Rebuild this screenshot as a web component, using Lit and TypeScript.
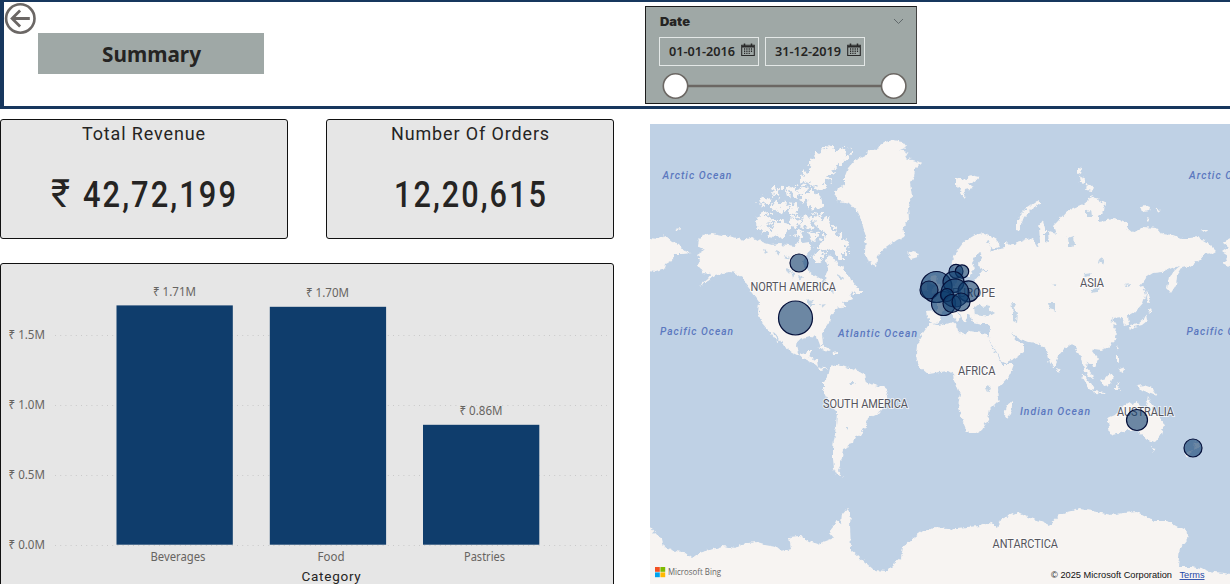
import { LitElement, html, svg, css } from "lit";
import { customElement, property } from "lit/decorators.js";

/** Single line of text set to an exact width. */
@customElement("fit-text")
class FitText extends LitElement {
  @property() text = "";
  @property({ type: Number }) width = 100;
  @property({ type: Number }) height = 20;
  @property({ type: Number }) baseline = 15;
  static styles = css`
    :host { display: block; }
    svg { display: block; overflow: visible; }
    text { fill: currentColor; }
  `;
  render() {
    return html`<svg width=${this.width} height=${this.height}>
      <text x="0" y=${this.baseline} textLength=${this.width} lengthAdjust="spacingAndGlyphs">${this.text}</text>
    </svg>`;
  }
}

const LAND: string[] = [
  // North America
  "698,240 703,235 712,233 722,235 733,237 744,240 752,237 758,240 765,243 772,245 780,244 788,245 795,246 800,238 803,243 809,242 812,248 806,255 803,262 806,269 813,274 818,277 821,280 823,287 826,284 825,276 829,268 826,262 828,254 834,257 838,265 844,269 850,278 857,287 859,292 850,293 852,299 843,303 846,307 836,309 830,317 829,322 825,328 822,334 823,344 820,345 817,337 810,336 803,338 797,341 796,347 799,355 805,353 808,350 812,350 809,357 817,360 818,366 823,368 828,368 821,370 815,364 803,358 793,353 785,347 779,339 776,333 773,332 779,342 775,339 768,330 762,323 758,313 759,302 752,292 745,283 742,277 735,273 730,272 723,273 715,275 707,282 699,286 708,278 711,274 703,273 698,265 700,260 697,255 705,250 697,246",
  // Greenland
  "893,140 903,142 907,147 900,150 908,153 905,158 922,163 915,170 914,178 910,183 912,197 908,207 909,220 903,228 905,236 897,240 890,245 883,250 878,255 876,266 869,263 865,252 866,237 862,223 858,212 850,203 838,201 834,192 845,184 845,176 848,168 855,160 867,155 868,150 876,151 880,145 885,142",
  // Caribbean
  "818,347 824,346 831,350 829,351 822,349", "832,352 838,351 838,354 833,354",
  // South America
  "830,367 838,364 845,366 853,370 858,371 865,375 867,383 875,385 883,387 888,391 887,397 883,405 882,411 877,414 868,418 866,426 860,435 854,438 853,443 847,444 849,447 844,449 843,457 840,461 840,467 838,471 843,477 837,474 834,468 833,459 833,447 836,427 837,412 830,405 823,389 823,382 828,376",
  // Africa
  "930,323 940,326 953,322 957,325 958,331 964,334 970,331 987,334 990,342 997,355 1002,364 1014,364 1010,375 998,388 999,400 990,409 988,420 982,430 975,434 968,434 963,422 958,408 960,393 957,386 954,381 953,374 948,371 940,372 928,374 921,368 917,361 916,353 917,345 923,333",
  "1012,401 1012,407 1010,415 1007,419 1004,415 1006,406",
  // Eurasia
  "951,266 953,258 957,251 963,243 970,238 975,235 983,233 990,236 997,240 1000,246 994,249 988,246 992,251 1000,249 1005,248 1005,240 1010,245 1020,242 1027,239 1032,238 1037,247 1040,242 1039,226 1043,220 1045,228 1045,242 1049,243 1048,231 1056,234 1053,226 1058,221 1066,212 1073,208 1083,204 1088,200 1092,195 1097,199 1105,203 1104,211 1098,217 1098,221 1115,219 1127,222 1127,228 1133,233 1143,227 1157,228 1162,234 1173,235 1181,238 1190,238 1198,237 1208,243 1216,251 1211,254 1206,252 1200,260 1190,266 1182,268 1177,276 1176,285 1171,293 1167,288 1169,278 1175,270 1180,266 1172,268 1163,272 1153,273 1145,278 1139,287 1143,286 1146,294 1143,303 1136,311 1127,316 1128,324 1125,325 1122,317 1113,318 1110,321 1117,323 1113,327 1117,333 1115,341 1107,348 1101,350 1094,349 1093,352 1098,359 1095,367 1087,362 1086,367 1092,374 1093,380 1087,375 1083,366 1081,358 1075,347 1072,344 1065,349 1059,356 1054,368 1050,363 1047,350 1042,346 1037,343 1028,342 1018,338 1012,333 1016,341 1024,344 1024,352 1015,358 1005,363 1001,361 995,349 988,338 990,330 989,324 981,324 973,322 970,316 966,314 967,320 964,322 960,314 953,309 961,317 956,321 952,314 946,309 941,313 940,320 935,324 928,321 926,311 938,310 938,303 930,300 940,295 948,289 955,285 957,278 962,278 964,283 972,282 978,278 980,272 990,270 982,270 979,263 983,256 979,253 975,258 972,263 974,269 969,277 964,276 961,269 955,270",
  // British Isles, Iceland, Svalbard
  "931,276 937,275 936,281 941,287 940,292 931,293 934,286 930,282", "922,284 928,282 928,290 921,291",
  "908,254 912,251 919,253 918,257 911,259",
  "956,178 966,180 970,175 979,177 974,183 969,182 973,188 965,190 964,198 960,193 961,188 956,185",
  // Novaya Zemlya and Siberian islands
  "1016,230 1016,222 1021,214 1028,207 1040,199 1040,204 1031,210 1024,217 1021,225 1020,231",
  "1077,167 1082,168 1081,175 1077,173", "1079,176 1085,179 1084,185 1080,182", "1087,184 1093,186 1092,191 1086,190",
  "1140,206 1145,205 1150,207 1149,211 1142,212", "1155,208 1160,210 1158,213", "1146,218 1150,219 1149,221",
  "1201,229 1207,229 1205,232", "675,229 680,228 679,231",
  "1147,290 1150,299 1148,303 1146,299", "1148,309 1153,310 1149,314", "1146,315 1147,321 1142,325 1134,327 1131,330 1130,326 1138,324 1144,319",
  "1117,345 1119,350 1116,348",
  // Chukotka and Alaska across the date line
  "640,237 658,239 665,236 672,242 679,244 683,250 692,253 683,254 674,254 673,260 666,264 665,269 656,272 640,270",
  "1238,235 1223,242 1229,247 1222,252 1228,256 1223,264 1238,271",
  // South-east Asia and Oceania
  "1080,373 1086,377 1093,387 1094,391 1089,388", "1094,391 1104,392 1105,394 1095,393",
  "1100,380 1106,378 1110,373 1114,376 1110,385 1104,386", "1116,383 1120,382 1117,385 1120,390 1116,390",
  "1116,356 1119,356 1119,363 1116,361", "1121,367 1124,369 1123,373 1119,371",
  "1137,386 1144,385 1152,388 1157,395 1152,393 1146,392 1141,390",
  "1107,418 1116,414 1124,405 1129,402 1132,404 1138,401 1139,406 1145,410 1148,397 1152,405 1155,412 1161,418 1164,425 1161,435 1155,442 1147,440 1141,435 1138,431 1127,430 1121,433 1110,436 1109,427",
  "1151,447 1157,448 1154,452", "1195,441 1200,445 1194,450", "1184,455 1191,451 1188,458",
  "1057,368 1060,370 1058,373",
  // Antarctica
  "640,520 650,527 655,533 662,539 664,547 674,551 684,552 692,558 699,553 710,550 722,546 735,548 742,544 755,542 765,545 776,547 782,552 791,549 789,537 800,536 808,541 817,544 826,541 834,538 829,532 833,527 836,521 841,524 842,514 847,508 851,512 850,526 851,550 858,556 865,562 874,570 887,571 893,565 901,558 903,547 912,539 923,531 935,528 947,529 967,527 980,526 990,522 997,527 1000,520 1008,516 1018,512 1030,518 1041,521 1050,525 1058,516 1068,512 1080,509 1097,512 1110,515 1123,513 1137,512 1147,517 1153,521 1167,521 1178,527 1188,532 1187,540 1180,548 1178,567 1193,567 1208,571 1238,575 1238,594 640,594",
];

// Canadian Arctic islands
const ARCTIC: string[] = [
  "828,147 836,149 845,148 850,154 841,164 834,170 828,180 824,188 818,191 811,184 803,186 800,175 808,172 810,166 811,158 819,152",
  "812,192 818,194 824,200 822,207 809,209 807,202 798,199 803,192",
  "799,186 807,188 804,194 796,193", "787,187 796,188 798,196 790,198",
  "775,186 781,190 778,197 772,193", "762,198 772,196 769,203 759,206",
  "771,204 781,201 789,205 784,212 775,213", "791,202 799,207 797,214 788,212",
  "759,215 767,213 772,219 768,229 761,233 757,225",
  "771,220 782,220 791,226 788,234 779,238 769,237 765,230 773,227",
  "789,215 798,217 801,224 793,227", "796,229 804,230 801,238 794,236",
  "802,215 812,217 813,226 807,230 801,223",
  "812,214 822,216 830,221 834,230 841,236 847,244 849,253 842,253 846,261 839,261 835,253 829,249 823,251 817,247 823,242 826,235 820,230 814,224",
  "809,231 817,233 820,240 811,241", "815,253 820,250 826,256 819,262 812,261",
  "852,287 859,288 859,294 853,294",
];

const WATER: string[] = [
  "974,308 979,304 984,307 988,305 989,309 995,313 990,316 982,315 975,314",
  "1011,303 1017,303 1014,309 1018,313 1017,323 1013,321 1013,313",
  "985,388 989,385 991,389 987,392", "1068,238 1074,236 1075,245 1069,247", "1083,250 1079,253", "1100,258 1105,260 1103,265 1099,262",
  "1086,211 1092,210 1093,217 1086,217", "1048,303 1055,303 1056,311 1049,309", "1092,291 1099,287 1097,292 1091,293",
  "1084,274 1091,273 1090,276 1085,277", "1050,284 1057,283 1055,286",
  "784,255 790,257 786,260", "775,251 781,252 779,256", "763,249 768,251 765,254", "786,268 792,270 789,274", "798,275 803,277 800,281",
  "806,299 814,300 811,303 816,306 809,306", "820,305 826,304 822,308",
  "791,272 794,273 793,279", "1125,285 1130,284 1129,287", "838,275 843,278 839,280", "830,289 835,291 832,294",
  "849,382 855,382 852,385", "846,427 849,427 848,430", "990,244 986,243 988,240",
];

interface Bubble { x: number; y: number; r: number; }
const BUBBLES: Bubble[] = [
  { x: 799, y: 263, r: 9 }, { x: 795.5, y: 318, r: 17 },
  { x: 936.5, y: 287, r: 15.5 }, { x: 929, y: 290, r: 9 },
  { x: 956, y: 271.3, r: 7 }, { x: 962, y: 271.5, r: 6.7 },
  { x: 953.5, y: 282, r: 10.5 }, { x: 968.5, y: 291.3, r: 10.5 },
  { x: 943.5, y: 303.5, r: 12 }, { x: 955, y: 293, r: 14 },
  { x: 947, y: 295, r: 6.5 }, { x: 952, y: 303.5, r: 9 }, { x: 961, y: 302, r: 9 },
  { x: 1137, y: 420, r: 10.5 }, { x: 1193, y: 448, r: 9 },
];

interface Label { t: string; x: number; y: number; w: number; sea?: boolean; }
const LABELS: Label[] = [
  { t: "Arctic Ocean", x: 662.5, y: 179, w: 70, sea: true },
  { t: "Arctic Ocean", x: 1189, y: 179, w: 70, sea: true },
  { t: "Pacific Ocean", x: 660, y: 335, w: 74, sea: true },
  { t: "Pacific Ocean", x: 1186.5, y: 335, w: 74, sea: true },
  { t: "Atlantic Ocean", x: 838, y: 337, w: 80, sea: true },
  { t: "Indian Ocean", x: 1020, y: 415, w: 71, sea: true },
  { t: "NORTH AMERICA", x: 750.5, y: 291, w: 85.5 },
  { t: "SOUTH AMERICA", x: 823, y: 408, w: 85 },
  { t: "EUROPE", x: 952, y: 297, w: 43 },
  { t: "ASIA", x: 1080, y: 287, w: 24 },
  { t: "AFRICA", x: 958, y: 375, w: 37.5 },
  { t: "AUSTRALIA", x: 1117, y: 416, w: 57 },
  { t: "ANTARCTICA", x: 992.5, y: 548, w: 65.5 },
];

@customElement("world-map")
class WorldMap extends LitElement {
  static styles = css`
    :host { display: block; }
    svg { display: block; }
    .land { fill: #f7f4f2; }
    .water { fill: #c3d4e5; }
    .bubble { fill: #0f3d6e; fill-opacity: 0.6; stroke: #05103a; stroke-width: 1.2; }
    .place { font: 12px Roboto, sans-serif; fill: #55555d; paint-order: stroke; stroke: #ffffff; stroke-opacity: 0.65; stroke-width: 2px; }
    .sea { font: italic 500 11px Roboto, sans-serif; fill: #5b78bf; letter-spacing: 1.1px; }
    .credit { font: 9px "Liberation Sans", Arial, sans-serif; fill: #111; }
    .link { fill: #2448a8; text-decoration: underline; }
    .brand { font: 9px "Open Sans", sans-serif; fill: #666; }
  `;
  render() {
    return html`<svg width="580" height="460" viewBox="650 124 580 460">
      <defs>
        <filter id="coast" filterUnits="userSpaceOnUse" x="640" y="114" width="600" height="480">
          <feTurbulence type="fractalNoise" baseFrequency="0.22" numOctaves="3" seed="4" result="n" />
          <feDisplacementMap in="SourceGraphic" in2="n" scale="5" xChannelSelector="R" yChannelSelector="G" />
        </filter>
        <filter id="fjords" filterUnits="userSpaceOnUse" x="740" y="124" width="140" height="180">
          <feTurbulence type="fractalNoise" baseFrequency="0.2" numOctaves="4" seed="9" result="n" />
          <feDisplacementMap in="SourceGraphic" in2="n" scale="14" xChannelSelector="R" yChannelSelector="G" />
        </filter>
      </defs>
      <rect x="650" y="124" width="580" height="460" fill="#bfd1e5" />
      <g filter="url(#fjords)">${ARCTIC.map((p) => svg`<polygon class="land" points=${p} />`)}</g>
      <g filter="url(#coast)">
        ${LAND.map((p) => svg`<polygon class="land" points=${p} />`)}
        ${WATER.map((p) => svg`<polygon class="water" points=${p} />`)}
      </g>
      ${LABELS.map((l) => svg`<text class=${l.sea ? "sea" : "place"} x=${l.x} y=${l.y} textLength=${l.w} lengthAdjust="spacingAndGlyphs">${l.t}</text>`)}
      ${BUBBLES.map((b) => svg`<circle class="bubble" cx=${b.x} cy=${b.y} r=${b.r} />`)}
      <rect x="655" y="567" width="4.8" height="4.8" fill="#f25022" />
      <rect x="660.4" y="567" width="4.8" height="4.8" fill="#7fba00" />
      <rect x="655" y="572.4" width="4.8" height="4.8" fill="#00a4ef" />
      <rect x="660.4" y="572.4" width="4.8" height="4.8" fill="#ffb900" />
      <text class="brand" x="668" y="575" textLength="53" lengthAdjust="spacingAndGlyphs">Microsoft Bing</text>
      <text class="credit" x="1051" y="578" textLength="121" lengthAdjust="spacingAndGlyphs">© 2025 Microsoft Corporation</text>
      <text class="credit link" x="1179.5" y="578" textLength="25" lengthAdjust="spacingAndGlyphs">Terms</text>
    </svg>`;
  }
}

const BARS = [
  { name: "Beverages", label: "₹ 1.71M", x: 116.5, top: 305.4, ly: 296, lx: 153, nx: 150.5, nw: 55 },
  { name: "Food", label: "₹ 1.70M", x: 269.8, top: 306.8, ly: 297, lx: 306, nx: 317.5, nw: 27 },
  { name: "Pastries", label: "₹ 0.86M", x: 423, top: 424.8, ly: 415, lx: 459.5, nx: 464, nw: 41 },
];
const TICKS = [
  { t: "₹ 1.5M", y: 335.5 }, { t: "₹ 1.0M", y: 405.5 }, { t: "₹ 0.5M", y: 475.5 }, { t: "₹ 0.0M", y: 545.5 },
];

@customElement("category-chart")
class CategoryChart extends LitElement {
  static styles = css`
    :host { display: block; }
    svg { display: block; }
    .grid { stroke: #c9c9c9; stroke-width: 1; stroke-dasharray: 1 4.2; }
    .bar { fill: #0f3d6c; }
    .small { font: 12px "Noto Sans", sans-serif; fill: #666461; }
    .axis { font: 13px Roboto, sans-serif; fill: #252423; letter-spacing: 0.7px; }
  `;
  render() {
    return html`<svg width="612" height="321" viewBox="1 264 612 321">
      ${TICKS.map((k) => svg`<line class="grid" x1="55" x2="607" y1=${k.y} y2=${k.y} />
        <text class="small" x="8.5" y=${k.y + 3.9} textLength="36.5" lengthAdjust="spacingAndGlyphs">${k.t}</text>`)}
      ${BARS.map((b) => svg`<rect class="bar" x=${b.x} y=${b.top} width="116.3" height=${544.7 - b.top} />
        <text class="small" x=${b.lx} y=${b.ly} textLength="43" lengthAdjust="spacingAndGlyphs">${b.label}</text>
        <text class="small" x=${b.nx} y="561" textLength=${b.nw} lengthAdjust="spacingAndGlyphs">${b.name}</text>`)}
      <text class="axis" x="301.5" y="581" textLength="60" lengthAdjust="spacingAndGlyphs">Category</text>
    </svg>`;
  }
}

@customElement("app-root")
class AppRoot extends LitElement {
  static styles = css`
    :host { display: block; width: 1230px; height: 586px; overflow: hidden; background: #fff; color: #252423; }
    * { box-sizing: border-box; }
    svg { display: block; }
    .header { display: flex; align-items: flex-start; height: 109px; border: solid #17375e; border-width: 2px 0 3px 4px; }
    .back { margin: 1px 0 0 0; width: 33px; flex: none; }
    .title { width: 226px; height: 41px; margin: 31px 0 0 1px; background: #9fa8a6; display: flex; justify-content: center; flex: none; font: 700 22px "Noto Sans", sans-serif; }
    .slicer { width: 271.5px; height: 98px; margin: 4px 0 0 381px; border: 1px solid #1b1b1b; border-right-color: #444; background: #9fa8a6; flex: none; padding: 7px 6px 0 13px; }
    .row { display: flex; justify-content: space-between; height: 23px; padding-left: 1px; }
    .name { font: 900 11.5px Inter, "Open Sans", sans-serif; }
    .chev { margin: 4px 6px 0 0; }
    .dates { display: flex; gap: 6px; height: 29px; }
    .date { width: 100px; height: 29px; border: 1px solid #e4e8e7; display: flex; padding-left: 9px; gap: 6px; font: 600 12px "Noto Sans", sans-serif; }
    .cal { margin-top: 4.5px; }
    .body { display: flex; align-items: flex-start; padding-top: 10px; height: 475px; overflow: hidden; }
    .left { width: 614px; flex: none; }
    .cards { display: flex; justify-content: space-between; }
    .card { width: 288px; height: 120px; border: 1px solid #111; border-radius: 3px; background: #e6e6e6; display: flex; flex-direction: column; align-items: center; }
    .cap { font: 18.5px Roboto, sans-serif; letter-spacing: 0.9px; }
    .val { font: 500 37.5px Roboto, sans-serif; letter-spacing: 2.5px; }
    .value { margin-top: 22px; display: flex; gap: 13px; padding-left: 1px; }
    .rupee { font: 39px Roboto, sans-serif; }
    .chart { margin-top: 24px; height: 340px; border: 1px solid #111; border-radius: 3px; background: #e6e6e6; }
    .map { margin: 5px 0 0 36px; }
  `;

  private calendar() {
    return html`<svg class="cal" width="14" height="14" viewBox="0 0 14 14" fill="none" stroke="#292929">
      <path d="M.7 2.2h12.6v10.3H.7z" stroke-width="1.1" />
      <path d="M1 3.8h12M3.5.5v3M10.5.5v3" stroke-width="1.5" />
      <path d="M3 6h1.2M5.3 6h1.2M7.6 6h1.2M9.9 6h1.2M3 8.2h1.2M5.3 8.2h1.2M7.6 8.2h1.2M9.9 8.2h1.2M3 10.4h1.2M5.3 10.4h1.2M7.6 10.4h1.2" stroke-width="1.4" />
    </svg>`;
  }

  render() {
    return html`
      <div class="header">
        <svg class="back" width="33" height="33" viewBox="0 0 33 33" fill="none" stroke="#6b6765">
          <circle cx="16.3" cy="15.5" r="14.2" stroke-width="2.6" />
          <path d="M25.8 15.5H8M16.1 7.5l-8 8 8 8" stroke-width="2.8" />
        </svg>
        <div class="title"><fit-text text="Summary" width="99" height="41" baseline="29"></fit-text></div>
        <div class="slicer">
          <div class="row">
            <fit-text class="name" text="Date" width="30" height="16" baseline="12"></fit-text>
            <svg class="chev" width="11" height="7" viewBox="0 0 11 7" fill="none" stroke="#60686a"><path d="M1 1l4.5 4.5L10 1" /></svg>
          </div>
          <div class="dates">
            <div class="date"><fit-text text="01-01-2016" width="66" height="27" baseline="18"></fit-text>${this.calendar()}</div>
            <div class="date"><fit-text text="31-12-2019" width="66" height="27" baseline="18"></fit-text>${this.calendar()}</div>
          </div>
          <svg width="250" height="34" viewBox="0 0 250 34">
            <path d="M16 20H235" stroke="#6b6763" stroke-width="2.6" />
            <circle cx="16.5" cy="20" r="12.2" fill="#fff" stroke="#6b6763" stroke-width="1.6" />
            <circle cx="234.7" cy="20" r="12.2" fill="#fff" stroke="#6b6763" stroke-width="1.6" />
          </svg>
        </div>
      </div>
      <div class="body">
        <div class="left">
          <div class="cards">
            <div class="card">
              <fit-text class="cap" text="Total Revenue" width="124" height="26" baseline="19.5"></fit-text>
              <div class="value">
                <fit-text class="rupee" text="₹" width="19" height="50" baseline="38.5"></fit-text>
                <fit-text class="val" text="42,72,199" width="155" height="50" baseline="39"></fit-text>
              </div>
            </div>
            <div class="card">
              <fit-text class="cap" text="Number Of Orders" width="159" height="26" baseline="19.5"></fit-text>
              <div class="value">
                <fit-text class="val" text="12,20,615" width="154" height="50" baseline="39"></fit-text>
              </div>
            </div>
          </div>
          <div class="chart"><category-chart></category-chart></div>
        </div>
        <world-map class="map"></world-map>
      </div>
    `;
  }
}
